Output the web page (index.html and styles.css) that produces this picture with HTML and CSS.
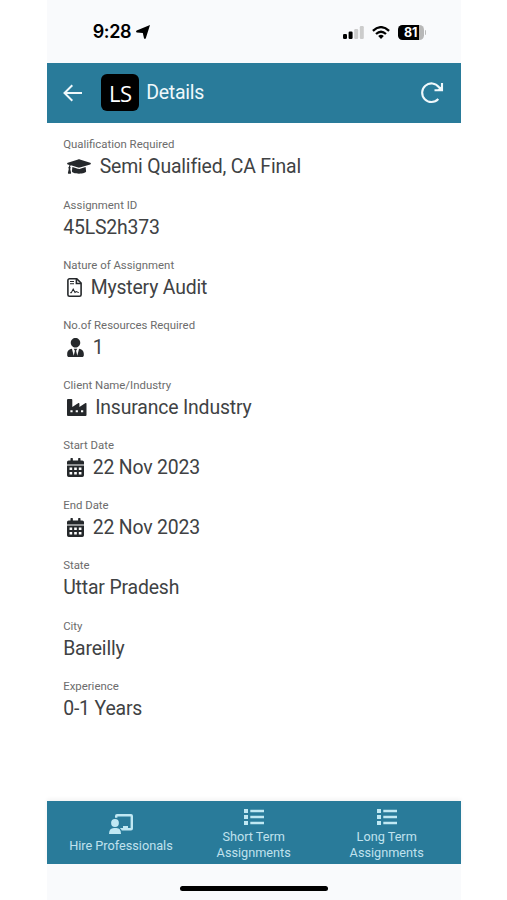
FILE: index.html
```html
<!DOCTYPE html>
<html lang="en">
<head>
<meta charset="utf-8">
<title>Details</title>
<link rel="stylesheet" href="styles.css">
</head>
<body>
<svg class="defs" width="0" height="0">
  <symbol id="calendar" viewBox="0 0 18 20" preserveAspectRatio="none">
    <path fill-rule="evenodd" d="M0 8H18V18.2a1.8 1.8 0 0 1-1.8 1.8H1.8A1.8 1.8 0 0 1 0 18.2ZM2.7 10V12.5H5.5V10ZM7.6 10V12.5H10.4V10ZM12.5 10V12.5H15.3V10ZM2.7 14.8V17.3H5.5V14.8ZM7.6 14.8V17.3H10.4V14.8ZM12.5 14.8V17.3H15.3V14.8Z"/>
    <path d="M0 6.9V4.3A1.8 1.8 0 0 1 1.8 2.5H3.7V.5Q3.7 0 4.2 0H5.7Q6.2 0 6.2.5V2.5H11.8V.5Q11.8 0 12.3 0H13.8Q14.3 0 14.3.5V2.5H16.2A1.8 1.8 0 0 1 18 4.3V6.9Z"/>
  </symbol>
  <symbol id="list" viewBox="0 0 20 16" preserveAspectRatio="none">
    <path d="M0 0H4V4H0ZM6.3.8H20V3.2H6.3ZM0 6H4V10H0ZM6.3 6.8H20V9.2H6.3ZM0 12H4V16H0ZM6.3 12.8H20V15.2H6.3Z"/>
  </symbol>
</svg>
<div class="phone">
  <div class="status">
    <span class="time">9:28</span>
    <svg class="location" viewBox="0 0 14 14"><path d="M14 0 9.8 13.2Q9 14.6 8 13.2L6.8 7.9.8 7.5Q-.6 6.6.7 5.6Z"/></svg>
    <svg class="signal" viewBox="0 0 21 13"><rect y="8" width="4" height="5" rx="1.2"/><rect x="5.6" y="5.6" width="4" height="7.4" rx="1.2"/><g fill="#ccc"><rect x="11.2" y="3" width="4" height="10" rx="1.2"/><rect x="16.8" width="4" height="13" rx="1.2"/></g></svg>
    <svg class="wifi" viewBox="0 0 18 13"><g fill="none" stroke="#000" stroke-width="2.3"><path d="M.9 4.8Q9-2.5 17.1 4.8"/><path d="M4 8Q9 3.6 14 8"/></g><path d="M6.2 10Q9 7.6 11.8 10L9 13Z"/></svg>
    <span class="battery"><span class="level">81</span></span><span class="tip"></span>
  </div>
  <header class="bar">
    <svg class="back" viewBox="0 0 20 18"><path d="M19 9H2M9.3 1.2 1.5 9l7.8 7.8"/></svg>
    <span class="logo">LS</span>
    <h1 class="title">Details</h1>
    <svg class="refresh" viewBox="0 0 24 24"><path d="M18.3 18A9.3 9.3 0 1 1 18.8 6L21.5 9M22 2V9.2H14.5"/><path class="corner" d="M22.5 4V9.5H17Z"/></svg>
  </header>
  <main class="details">
    <section class="item"><div class="label">Qualification Required</div><div class="value"><svg class="cap" viewBox="0 0 640 512"><path d="M622.34 153.2L343.4 67.5c-15.2-4.67-31.6-4.67-46.79 0L17.66 153.2c-23.54 7.23-23.54 38.36 0 45.59l48.63 14.94c-10.67 13.19-17.23 29.28-17.88 46.9C38.78 266.15 32 276.11 32 288c0 10.78 5.68 19.85 13.86 25.65L20.33 428.53C18.11 438.52 25.71 448 35.94 448h56.11c10.24 0 17.84-9.48 15.62-19.47L82.14 313.65C90.32 307.85 96 298.78 96 288c0-11.57-6.47-21.25-15.66-26.87.76-15.02 8.44-28.3 20.69-36.72L296.6 284.5c9.06 2.78 26.44 6.25 46.79 0l278.95-85.7c23.55-7.24 23.55-38.36 0-45.6zM352.79 315.09c-28.53 8.76-52.84 3.92-65.59 0l-145.02-44.55L128 384c0 35.35 85.96 64 192 64s192-28.65 192-64l-14.18-113.47-145.03 44.56z"/></svg>Semi Qualified, CA Final</div></section>
    <section class="item"><div class="label">Assignment ID</div><div class="value">45LS2h373</div></section>
    <section class="item"><div class="label">Nature of Assignment</div><div class="value"><svg class="contract" viewBox="0 0 15 20" preserveAspectRatio="none"><path class="line" d="M2.5.9H9.8L14.1 5.2V17.5a1.6 1.6 0 0 1-1.6 1.6h-10A1.6 1.6 0 0 1 .9 17.5v-15A1.6 1.6 0 0 1 2.5.9Z"/><path class="line" d="M9.4 1V5.7H14"/><path class="thin" d="M3 3.6H7M3 6H7M3.3 15.4H4.3L6.2 11.7 8 15.2 9.3 14.2 11.8 15.4"/></svg>Mystery Audit</div></section>
    <section class="item"><div class="label">No.of Resources Required</div><div class="value"><svg class="person" viewBox="0 0 448 512"><path d="M224 256c70.7 0 128-57.3 128-128S294.7 0 224 0 96 57.3 96 128s57.3 128 128 128zm95.8 32.6L272 480l-32-136 32-56h-96l32 56-32 136-47.8-191.4C56.9 292 0 350.3 0 422.4V464c0 26.5 21.5 48 48 48h352c26.5 0 48-21.5 48-48v-41.6c0-72.1-56.9-130.4-128.2-133.8z"/></svg>1</div></section>
    <section class="item"><div class="label">Client Name/Industry</div><div class="value"><svg class="factory" viewBox="0 0 20 17"><path fill-rule="evenodd" d="M1 0H4.5Q5.3 0 5.3 1V8L11.4 4.1Q12.4 3.6 12.4 4.7V8L18.5 4.1Q19.5 3.6 19.5 4.7V16Q19.5 17 18.5 17H1Q0 17 0 16V1Q0 0 1 0ZM3.4 11.2V13.2H5.6V11.2ZM8.7 11.2V13.2H10.9V11.2ZM14 11.2V13.2H16.2V11.2Z"/></svg>Insurance Industry</div></section>
    <section class="item"><div class="label">Start Date</div><div class="value"><svg class="date"><use href="#calendar"/></svg>22 Nov 2023</div></section>
    <section class="item"><div class="label">End Date</div><div class="value"><svg class="date"><use href="#calendar"/></svg>22 Nov 2023</div></section>
    <section class="item"><div class="label">State</div><div class="value">Uttar Pradesh</div></section>
    <section class="item"><div class="label">City</div><div class="value">Bareilly</div></section>
    <section class="item"><div class="label">Experience</div><div class="value">0-1 Years</div></section>
  </main>
  <nav class="tabs">
    <a class="tab hire"><svg class="teacher" viewBox="0 0 24 20"><circle cx="6" cy="9" r="3.9"/><path d="M0 20Q0 14 5 14H7.5Q12 14 12 20Z"/><path fill-rule="evenodd" d="M6 3.8V2Q6 0 8 0H22Q24 0 24 2V14.5Q24 16.5 22 16.5H12.8Q12 14.7 10.8 14H14V12H19V14H21.6V2.4H8.4V3.8Z"/></svg><span>Hire Professionals</span></a>
    <a class="tab"><svg class="list"><use href="#list"/></svg><span>Short Term<br>Assignments</span></a>
    <a class="tab"><svg class="list"><use href="#list"/></svg><span>Long Term<br>Assignments</span></a>
  </nav>
  <div class="home"><span class="pill"></span></div>
</div>
</body>
</html>
```

FILE: styles.css
```css
* { box-sizing: border-box; }
body { margin: 0; background: #fff; font-family: Roboto, "Liberation Sans", sans-serif; }
svg { display: block; flex: none; }
.defs { position: absolute; }
.phone { width: 414.5px; height: 900px; margin-left: 46.7px; display: flex; flex-direction: column; background: #fff; }
.status { height: 63px; flex: none; display: flex; align-items: center; padding: 1.5px 35px 0 46px; background: #f9fafc; }
.time { font: 600 18px/20px Inter, sans-serif; letter-spacing: -.35px; width: 39px; white-space: nowrap; }
.location { width: 14px; height: 14px; margin-left: 4px; }
.signal { width: 21px; height: 13px; margin-left: auto; }
.wifi { width: 18px; height: 13px; margin: 0 8px 0 8px; }
.battery { width: 26px; height: 15px; border-radius: 4.5px; background: linear-gradient(90deg, #000 21.5px, #b8b8b8 21.5px); }
.level { display: block; width: 26px; text-align: center; color: #fff; font: 700 12.5px/15px Inter, sans-serif; }
.tip { width: 1.5px; height: 5px; margin-left: 1px; border-radius: 0 2px 2px 0; background: #bbb; }
.bar { height: 59.5px; flex: none; display: flex; align-items: center; padding: 0 17px 0 16px; background: #297b9a; color: #eff8fb; }
.back { width: 20px; height: 18px; fill: none; stroke: #eff8fb; stroke-width: 2; }
.logo { width: 38px; height: 37px; margin-left: 18.5px; border-radius: 6px; background: #000; color: #fff; font: 22px/38px "Open Sans", sans-serif; text-align: center; letter-spacing: -.7px; }
.title { margin: 0 auto 0 7px; font-size: 19.5px; line-height: 24px; font-weight: 400; letter-spacing: -.25px; }
.refresh { width: 24px; height: 24px; fill: none; stroke: #eff8fb; stroke-width: 2.1; }
.refresh .corner { fill: #eff8fb; stroke: none; }
.details { flex: 1; padding: 14.9px 17px 0 16.5px; }
.item { height: 60.17px; }
.label { font-size: 11.4px; line-height: 14px; color: #6c6c6c; white-space: nowrap; }
.value { display: flex; align-items: center; height: 31px; font-size: 19.4px; letter-spacing: -.16px; color: #404244; white-space: nowrap; }
.value svg { fill: #25282b; }
.cap { width: 24px; height: 19px; margin: 0 8.5px 0 4px; }
.contract { width: 15px; height: 19px; margin: 0 8.5px 0 4px; }
.contract .line { fill: none; stroke: #25282b; stroke-width: 1.6; }
.contract .thin { fill: none; stroke: #25282b; stroke-width: 1.1; }
.person { width: 17px; height: 19px; margin: 0 8.5px 0 4px; }
.factory { width: 20px; height: 17px; margin: 0 8px 0 4px; }
.date { width: 17px; height: 19px; margin: 0 8.5px 0 4px; }
.tabs { height: 63.5px; flex: none; display: flex; background: #297b9a; box-shadow: 0 -2px 4px #0000000d; }
.tab { flex: 0 0 133px; display: flex; flex-direction: column; align-items: center; padding-top: 8px; color: #c0e2ee; font-size: 12.7px; line-height: 16px; text-align: center; }
.tab.hire { flex-basis: 140.5px; padding: 13px 0 0 8px; }
.tab svg { fill: #c0e8f3; }
.teacher { width: 24px; height: 20px; margin-bottom: 4px; }
.list { width: 20px; height: 16px; margin-bottom: 4px; }
.home { height: 36px; flex: none; display: flex; justify-content: center; padding-top: 22px; background: #f9fafc; }
.pill { width: 148px; height: 5px; border-radius: 3px; background: #000; }
```
